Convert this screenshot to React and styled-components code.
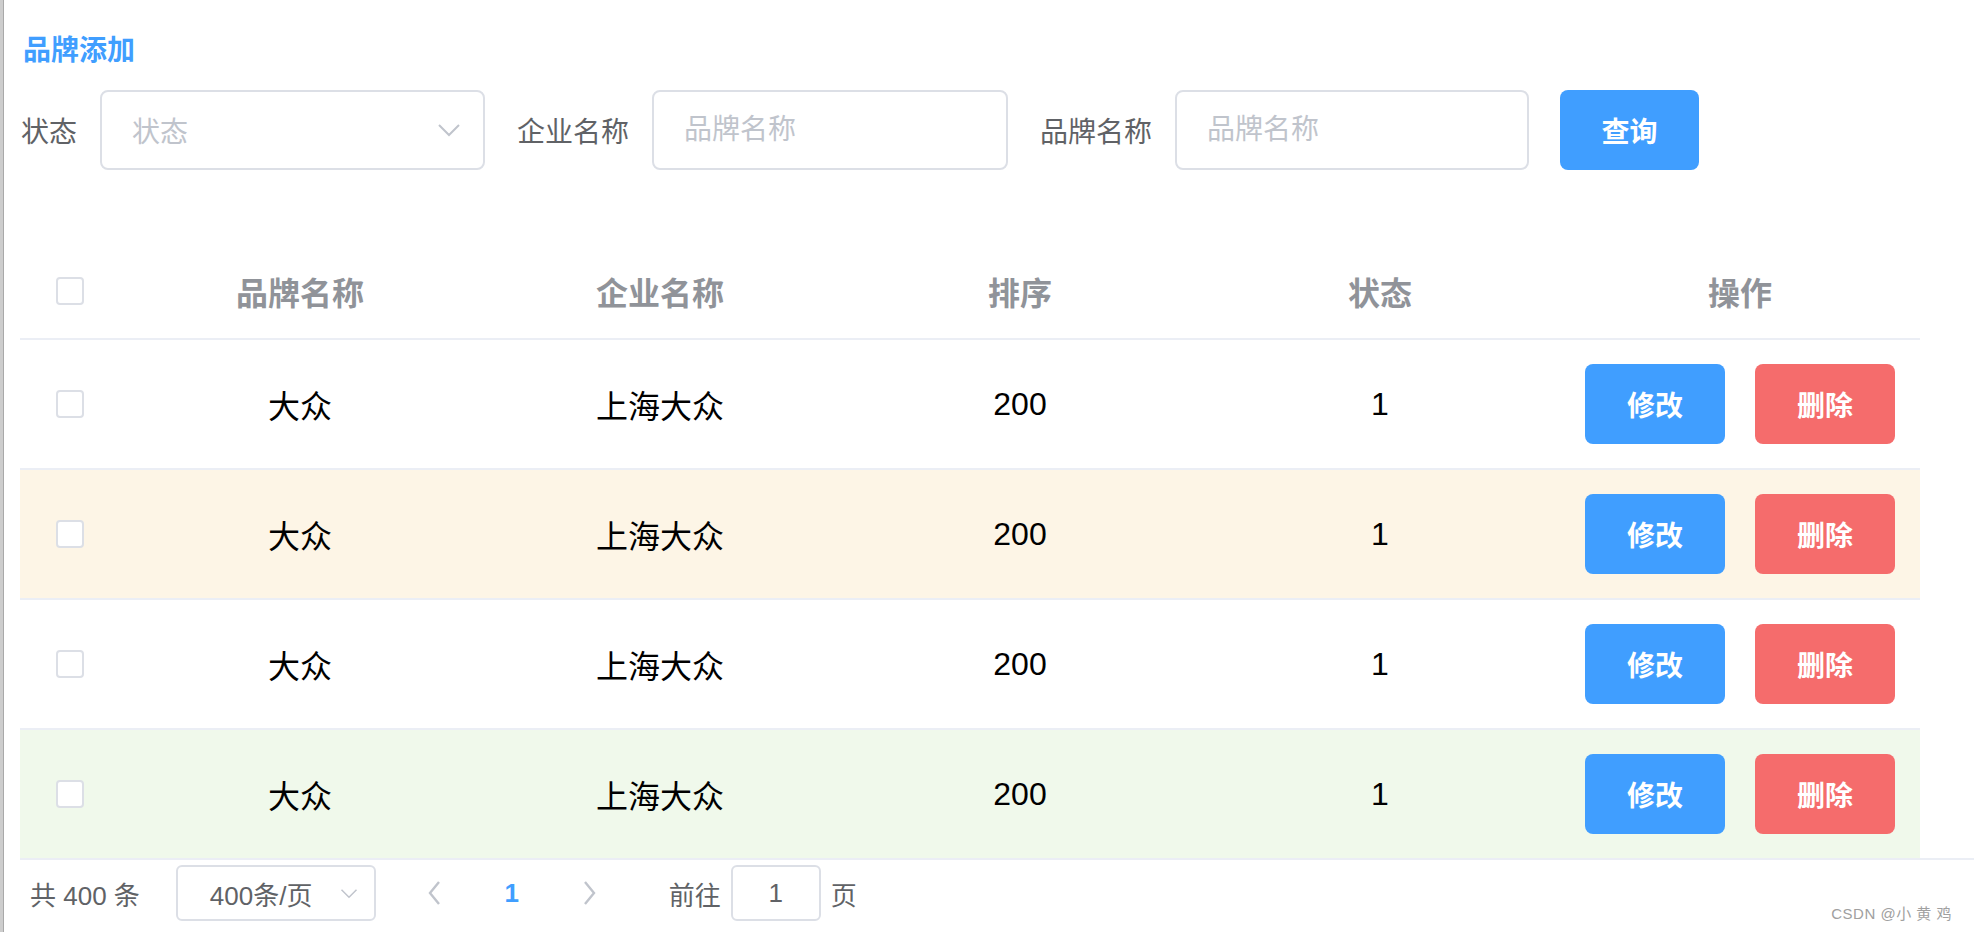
import React from 'react'
import styled, {createGlobalStyle, css} from 'styled-components'

const GlobalStyle = createGlobalStyle`
  html, body {
    margin: 0;
    padding: 0;
    background: #fff;
  }
  body {
    font-family: "Liberation Sans", "Noto Sans CJK SC", sans-serif;
  }
  * {
    box-sizing: border-box;
  }
`

const Page = styled.div`
  display: flex;
  width: 1974px;
  height: 932px;
  overflow: hidden;
`

const SideEdge = styled.div`
  width: 4px;
  flex: none;
  background: #cdcdcd;
  border-right: 1px solid #a9a9a9;
`

const Main = styled.div`
  position: relative;
  flex: 1;
  padding-left: 16px;
`

const Title = styled.div`
  margin-top: 31px;
  padding-left: 3px;
  height: 40px;
  line-height: 40px;
  font-size: 28px;
  font-weight: 700;
  color: #409eff;
`

const FilterForm = styled.div`
  display: flex;
  align-items: center;
  height: 80px;
  margin-top: 19px;
`

const FormItem = styled.div`
  display: flex;
  align-items: center;
  margin-right: 31px;
`

const Label = styled.span`
  padding-left: 1px;
  padding-right: 23px;
  font-size: 28px;
  color: #606266;
  white-space: nowrap;
`

const fieldBox = css`
  height: 80px;
  border: 2px solid #dcdfe6;
  border-radius: 8px;
  background: #fff;
  font-size: 28px;
  padding: 0 30px;
`

const TextBox = styled.input`
  ${fieldBox};
  width: ${p => p.$width}px;
  font-family: inherit;
  color: #606266;
  outline: none;
  &::placeholder {
    color: #c0c4cc;
  }
`

const SelectBox = styled.div`
  ${fieldBox};
  width: ${p => p.$width}px;
  display: flex;
  align-items: center;
  justify-content: space-between;
  padding-right: 22px;
  color: #c0c4cc;
`

const Button = styled.button`
  width: ${p => p.$width || 140}px;
  height: 80px;
  border: none;
  border-radius: 8px;
  font-family: inherit;
  font-size: 28px;
  font-weight: 700;
  color: #fff;
  cursor: pointer;
  background: ${p => (p.$danger ? '#f56c6c' : '#409eff')};
`

const Table = styled.div`
  width: 1900px;
  margin-top: 74px;
`

const columns = css`
  display: grid;
  grid-template-columns: 100px repeat(5, 360px);
`

const HeaderRow = styled.div`
  ${columns};
  height: 96px;
  border-bottom: 2px solid #ebeef5;
  color: #909399;
  font-weight: 700;
  font-size: 32px;
`

const rowTones = {
  plain: '#fff',
  warning: '#fdf5e6',
  success: '#f0f9eb',
}

const BodyRow = styled.div`
  ${columns};
  height: ${p => (p.$last ? 128 : 130)}px;
  border-bottom: ${p => (p.$last ? 'none' : '2px solid #ebeef5')};
  background: ${p => rowTones[p.$tone]};
  color: #000;
  font-size: 32px;
`

const Cell = styled.div`
  display: flex;
  align-items: center;
  justify-content: center;
  gap: 30px;
`

const Checkbox = styled.span`
  width: 28px;
  height: 28px;
  border: 2px solid #dcdfe6;
  border-radius: 4px;
  background: #fff;
`

const Pagination = styled.div`
  display: flex;
  align-items: center;
  height: 72px;
  padding-left: 10px;
  padding-bottom: 4px;
  border-top: 2px solid #ebeef5;
  font-size: 26px;
  color: #606266;
`

const Total = styled.span`
  margin-right: 36px;
`

const SizeSelect = styled.div`
  display: flex;
  align-items: center;
  justify-content: space-between;
  width: 200px;
  height: 56px;
  padding: 0 16px 0 32px;
  border: 2px solid #dcdfe6;
  border-radius: 6px;
  margin-right: 20px;
`

const PagerButton = styled.span`
  display: flex;
  align-items: center;
  justify-content: center;
  width: 60px;
  height: 56px;
  margin: 0 ${p => (p.$active ? 10 : 8)}px;
  color: ${p => (p.$active ? '#409eff' : '#c0c4cc')};
  font-weight: 700;
`

const Jumper = styled.div`
  display: flex;
  align-items: center;
  gap: 10px;
  margin-left: 41px;
`

const JumpInput = styled.div`
  display: flex;
  align-items: center;
  justify-content: center;
  width: 90px;
  height: 56px;
  border: 2px solid #dcdfe6;
  border-radius: 6px;
`

const Watermark = styled.span`
  position: absolute;
  right: 22px;
  bottom: 9px;
  font-size: 15px;
  color: #a0a0a0;
  letter-spacing: 0.5px;
`

const ChevronDown = ({size = 24}) => (
  <svg width={size} height={size / 2 + 2} viewBox="0 0 24 14" fill="none">
    <path d="M2 2 L12 12 L22 2" stroke="#c0c4cc" strokeWidth="2" />
  </svg>
)

const ChevronSide = ({dir}) => (
  <svg width="14" height="26" viewBox="0 0 14 26" fill="none">
    <path
      d={dir === 'left' ? 'M12 2 L3 13 L12 24' : 'M2 2 L11 13 L2 24'}
      stroke="#c0c4cc"
      strokeWidth="2.4"
    />
  </svg>
)

const rows = [
  {brand: '大众', company: '上海大众', ordered: 200, status: 1, tone: 'plain'},
  {brand: '大众', company: '上海大众', ordered: 200, status: 1, tone: 'warning'},
  {brand: '大众', company: '上海大众', ordered: 200, status: 1, tone: 'plain'},
  {brand: '大众', company: '上海大众', ordered: 200, status: 1, tone: 'success'},
]

const App = () => (
  <Page>
    <GlobalStyle />
    <SideEdge />
    <Main>
      <Title>品牌添加</Title>
      <FilterForm>
        <FormItem>
          <Label>状态</Label>
          <SelectBox $width={385}>
            <span>状态</span>
            <ChevronDown />
          </SelectBox>
        </FormItem>
        <FormItem>
          <Label>企业名称</Label>
          <TextBox $width={356} placeholder="品牌名称" />
        </FormItem>
        <FormItem>
          <Label>品牌名称</Label>
          <TextBox $width={354} placeholder="品牌名称" />
        </FormItem>
        <Button $width={139}>查询</Button>
      </FilterForm>

      <Table>
        <HeaderRow>
          <Cell><Checkbox /></Cell>
          <Cell>品牌名称</Cell>
          <Cell>企业名称</Cell>
          <Cell>排序</Cell>
          <Cell>状态</Cell>
          <Cell>操作</Cell>
        </HeaderRow>
        {rows.map((row, i) => (
          <BodyRow key={i} $tone={row.tone} $last={i === rows.length - 1}>
            <Cell><Checkbox /></Cell>
            <Cell>{row.brand}</Cell>
            <Cell>{row.company}</Cell>
            <Cell>{row.ordered}</Cell>
            <Cell>{row.status}</Cell>
            <Cell>
              <Button>修改</Button>
              <Button $danger>删除</Button>
            </Cell>
          </BodyRow>
        ))}
      </Table>

      <Pagination>
        <Total>共 400 条</Total>
        <SizeSelect>
          <span>400条/页</span>
          <ChevronDown size={18} />
        </SizeSelect>
        <PagerButton><ChevronSide dir="left" /></PagerButton>
        <PagerButton $active>1</PagerButton>
        <PagerButton><ChevronSide dir="right" /></PagerButton>
        <Jumper>
          <span>前往</span>
          <JumpInput>1</JumpInput>
          <span>页</span>
        </Jumper>
      </Pagination>
      <Watermark>CSDN @小 黄 鸡</Watermark>
    </Main>
  </Page>
)

export default App
